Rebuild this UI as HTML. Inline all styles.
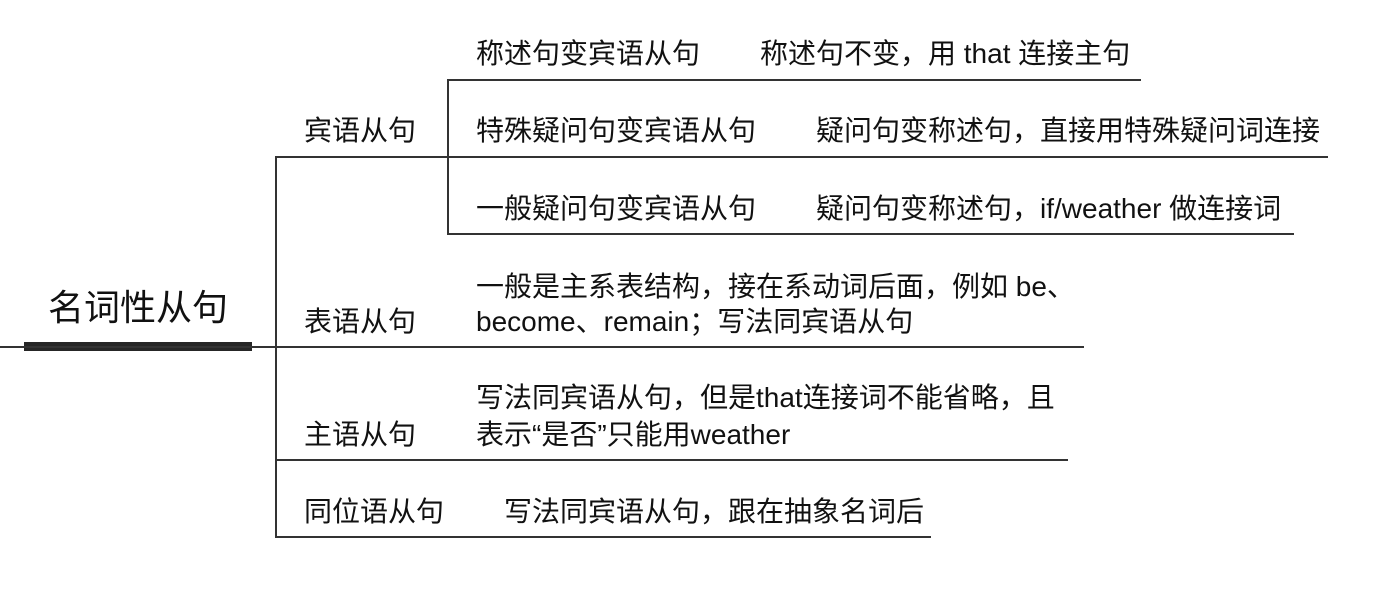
<!DOCTYPE html>
<html><head><meta charset="utf-8"><style>
html,body{margin:0;padding:0;background:#fff;width:1394px;height:599px;overflow:hidden;position:relative}
.t{position:absolute;font-family:"Liberation Sans","Noto Sans CJK SC",sans-serif;font-size:28px;line-height:28px;color:#111;white-space:nowrap}
.h{position:absolute;height:2px;background:#333}
.v{position:absolute;width:2px;background:#333}
</style></head><body>
<div class="t" style="left:48px;top:289px;font-size:36px;line-height:38px">名词性从句</div>
<div style="position:absolute;left:24px;top:342px;width:228px;height:9px;background:#262626"></div>
<div class="h" style="left:0;top:346px;width:276px"></div>
<div class="v" style="left:275px;top:156px;height:382px"></div>

<div class="h" style="left:276px;top:156px;width:172px"></div>
<div class="t" style="left:304px;top:117px">宾语从句</div>
<div class="v" style="left:447px;top:79px;height:156px"></div>

<div class="t" style="left:476px;top:40px">称述句变宾语从句</div>
<div class="t" style="left:760px;top:40px">称述句不变，用 that 连接主句</div>
<div class="h" style="left:448px;top:79px;width:693px"></div>

<div class="t" style="left:476px;top:117px">特殊疑问句变宾语从句</div>
<div class="t" style="left:816px;top:117px">疑问句变称述句，直接用特殊疑问词连接</div>
<div class="h" style="left:448px;top:156px;width:880px"></div>

<div class="t" style="left:476px;top:195px">一般疑问句变宾语从句</div>
<div class="t" style="left:816px;top:195px">疑问句变称述句，if/weather 做连接词</div>
<div class="h" style="left:448px;top:233px;width:846px"></div>

<div class="t" style="left:304px;top:308px">表语从句</div>
<div class="t" style="left:476px;top:273px">一般是主系表结构，接在系动词后面，例如 be、</div>
<div class="t" style="left:476px;top:308px">become、remain；写法同宾语从句</div>
<div class="h" style="left:276px;top:346px;width:808px"></div>

<div class="t" style="left:304px;top:421px">主语从句</div>
<div class="t" style="left:476px;top:384px">写法同宾语从句，但是that连接词不能省略，且</div>
<div class="t" style="left:476px;top:421px">表示“是否”只能用weather</div>
<div class="h" style="left:276px;top:459px;width:792px"></div>

<div class="t" style="left:304px;top:498px">同位语从句</div>
<div class="t" style="left:504px;top:498px">写法同宾语从句，跟在抽象名词后</div>
<div class="h" style="left:276px;top:536px;width:655px"></div>
</body></html>
